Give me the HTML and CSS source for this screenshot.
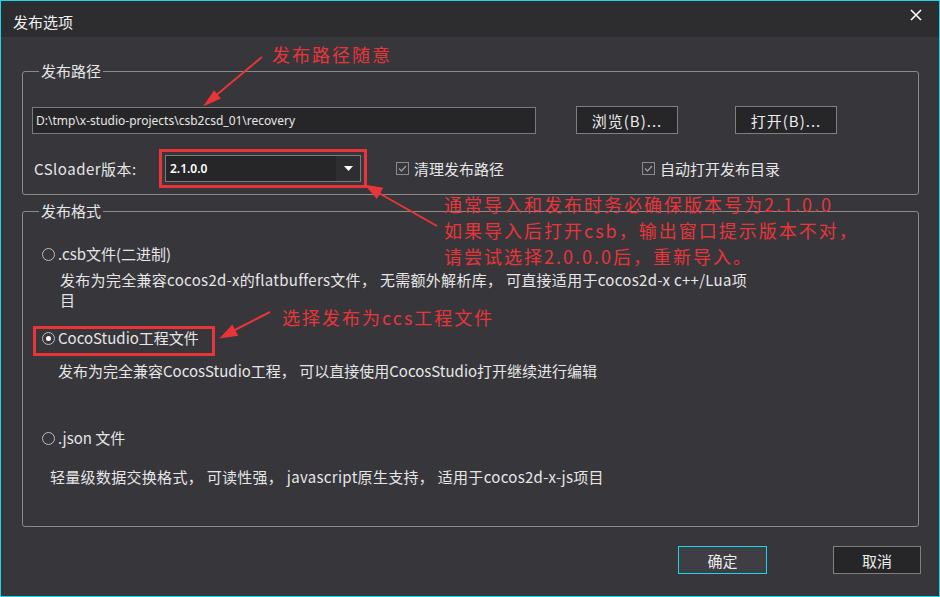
FILE: index.html
```html
<!DOCTYPE html>
<html lang="zh-CN">
  <head>
    <meta charset="UTF-8" />
    <meta name="viewport" content="width=device-width, initial-scale=1.0" />
    <title>发布选项</title>
    <link rel="stylesheet" href="styles.css">
  </head>
  <body>
    <div class="window">
      <div class="titlebar">
        <span class="title">发布选项</span>
        <svg class="close" width="12" height="12" viewBox="0 0 12 12">
          <path d="M1 1 L11 11 M11 1 L1 11" stroke="#ffffff" stroke-width="1.6" fill="none" />
        </svg>
      </div>

      <div class="group group-path">
        <div class="group-title">发布路径</div>
        <div class="row row-path">
          <div class="path-input">D:\tmp\x-studio-projects\csb2csd_01\recovery</div>
          <button class="btn btn-browse">浏览(B)...</button>
          <button class="btn btn-open">打开(B)...</button>
        </div>
        <div class="row row-version">
          <span class="version-label">CSloader版本:</span>
          <div class="combo">
            <span class="combo-value">2.1.0.0</span>
            <span class="combo-arrow">
              <svg width="9" height="5" viewBox="0 0 9 5"><path d="M0 0 L9 0 L4.5 5 Z" fill="#ffffff" /></svg>
            </span>
          </div>
          <label class="check check-clean">
            <span class="check-box">
              <svg width="11" height="11" viewBox="0 0 11 11"><path d="M2 5.5 L4.5 8 L9 3" stroke="#9a9a9a" stroke-width="1.3" fill="none" /></svg>
            </span>
            清理发布路径
          </label>
          <label class="check">
            <span class="check-box">
              <svg width="11" height="11" viewBox="0 0 11 11"><path d="M2 5.5 L4.5 8 L9 3" stroke="#9a9a9a" stroke-width="1.3" fill="none" /></svg>
            </span>
            自动打开发布目录
          </label>
        </div>
      </div>

      <div class="group group-format">
        <div class="group-title">发布格式</div>

        <label class="radio radio-csb"><span class="radio-dot"></span>.csb文件(二进制)</label>
        <p class="desc desc-csb">发布为完全兼容cocos2d-x的flatbuffers文件， 无需额外解析库， 可直接适用于cocos2d-x c++/Lua项<br>目</p>

        <label class="radio radio-ccs marked"><span class="radio-dot checked"></span>CocoStudio工程文件</label>
        <p class="desc desc-ccs">发布为完全兼容CocosStudio工程， 可以直接使用CocosStudio打开继续进行编辑</p>

        <label class="radio radio-json"><span class="radio-dot"></span>.json 文件</label>
        <p class="desc desc-json">轻量级数据交换格式， 可读性强， javascript原生支持， 适用于cocos2d-x-js项目</p>
      </div>

      <div class="footer">
        <button class="btn btn-ok">确定</button>
        <button class="btn btn-cancel">取消</button>
      </div>

      <!-- annotations drawn on top of the dialog -->
      <svg class="arrows" width="940" height="597" viewBox="0 0 940 597">
        <g stroke="#e8353a" stroke-width="2" fill="#e8353a">
          <line x1="262" y1="57" x2="214" y2="97" />
          <polygon points="206,104 219.3,98.1 214.1,91.9" />
          <line x1="437" y1="226" x2="377" y2="192" />
          <polygon points="367,186 381.7,188.6 376.7,197.2" />
          <line x1="270" y1="312" x2="231" y2="332" />
          <polygon points="222,337 236.7,334.9 232.1,326.1" />
        </g>
      </svg>
      <div class="note note-path">发布路径随意</div>
      <div class="note note-version">通常导入和发布时务必确保版本号为2.1.0.0<br>如果导入后打开csb，输出窗口提示版本不对，<br>请尝试选择2.0.0.0后，重新导入。</div>
      <div class="note note-ccs">选择发布为ccs工程文件</div>
    </div>
  </body>
</html>
```

FILE: styles.css
```css
body {
  margin: 0;
  padding: 0;
  background-color: #37363b;
  font-family: "Noto Sans CJK SC", sans-serif;
}

.window {
  position: relative;
  width: 940px;
  height: 597px;
  box-sizing: border-box;
  border: 1px solid #1ed4ee;
  background-color: #37363b;
  color: #e6e6e6;
  font-size: 15px;
  overflow: hidden;
}

.titlebar {
  display: flex;
  align-items: center;
  justify-content: space-between;
  height: 36px;
  padding: 6px 17px 0 12px;
  box-sizing: border-box;
  background-color: #2d2d30;
}

.title {
  font-size: 15px;
  line-height: 20px;
  color: #f0f0f0;
}

.close {
  margin-bottom: 14px;
}

.group {
  margin: 0 20px 0 21px;
  padding: 0 9px;
  border: 1px solid #8a8a8a;
  border-radius: 3px;
}

.group-path {
  margin-top: 34px;
  padding-bottom: 12px;
}

.group-format {
  margin-top: 16px;
  padding-bottom: 41px;
}

.group-title {
  display: table;
  margin: -11px 0 0 7px;
  padding: 0 2px;
  line-height: 20px;
  background-color: #37363b;
  color: #e6e6e6;
}

.row {
  display: flex;
  align-items: center;
}

.row-path {
  margin-top: 25px;
  height: 28px;
}

.path-input {
  width: 504px;
  height: 27px;
  box-sizing: border-box;
  padding: 0 3px;
  border: 1px solid #7a7a7a;
  background-color: #262628;
  font-family: "Noto Sans", sans-serif;
  font-size: 12px;
  line-height: 25px;
  color: #e6e6e6;
}

.btn {
  height: 28px;
  box-sizing: border-box;
  padding: 0;
  border: 1px solid #7f7f7f;
  background-color: #262628;
  color: #ececec;
  font-family: "Noto Sans CJK SC", sans-serif;
  font-size: 15px;
  cursor: pointer;
}

.btn-browse,
.btn-open {
  width: 102px;
  letter-spacing: 1px;
}

.btn-browse {
  margin-left: 40px;
}

.btn-open {
  margin-left: 57px;
}

.row-version {
  margin-top: 21px;
  height: 27px;
}

.version-label {
  width: 131px;
  margin-left: 2px;
  letter-spacing: 0.5px;
}

.combo {
  display: flex;
  align-items: center;
  width: 196px;
  height: 27px;
  box-sizing: border-box;
  border: 1px solid #7a7a7a;
  background-color: #262628;
  outline: 3px solid #e8353a;
  outline-offset: 3px;
}

.combo-value {
  flex: 1;
  padding-left: 4px;
  font-family: "Noto Sans", sans-serif;
  font-size: 12px;
  font-weight: 600;
  color: #ffffff;
}

.combo-arrow {
  display: flex;
  align-items: center;
  justify-content: center;
  width: 24px;
  height: 25px;
  background-color: #2e2e31;
}

.check {
  display: flex;
  align-items: center;
  gap: 5px;
}

.check-clean {
  width: 246px;
  margin-left: 35px;
}

.check-box {
  display: flex;
  align-items: center;
  justify-content: center;
  width: 13px;
  height: 13px;
  box-sizing: border-box;
  border: 1px solid #8c8c8c;
}

.radio {
  display: flex;
  align-items: center;
  gap: 3px;
  height: 16px;
  margin-left: 10px;
  line-height: 16px;
}

.radio-dot {
  display: flex;
  align-items: center;
  justify-content: center;
  width: 13px;
  height: 13px;
  box-sizing: border-box;
  border: 1px solid #bdbdbd;
  border-radius: 50%;
}

.radio-dot.checked::after {
  content: "";
  width: 5px;
  height: 5px;
  border-radius: 50%;
  background-color: #ffffff;
}

.radio-csb {
  margin-top: 25px;
}

.radio.marked {
  display: inline-flex;
  margin-top: 16px;
  margin-left: 1px;
  padding: 1px 13px 7px 6px;
  border: 3px solid #e8353a;
}

.radio-json {
  margin-top: 51px;
}

.desc {
  margin: 0;
  font-size: 15px;
  line-height: 16px;
}

.desc-csb {
  margin-top: 8px;
  margin-left: 28px;
  line-height: 20px;
  letter-spacing: 0.3px;
}

.desc-ccs {
  margin-top: 7px;
  margin-left: 26px;
}

.desc-json {
  margin-top: 23px;
  margin-left: 18px;
  letter-spacing: 0.3px;
}

.footer {
  display: flex;
  justify-content: flex-end;
  margin: 19px 18px 0 0;
}

.btn-ok {
  width: 89px;
  border-color: #19d4ef;
  background-color: #3f3e45;
}

.btn-cancel {
  width: 88px;
  margin-left: 66px;
}

.arrows {
  position: absolute;
  left: -1px;
  top: -1px;
  pointer-events: none;
}

.note {
  position: absolute;
  color: #e8353a;
  font-size: 18px;
  line-height: 26px;
  letter-spacing: 2px;
  white-space: nowrap;
}

.note-path {
  left: 271px;
  top: 40px;
}

.note-version {
  left: 443px;
  top: 190px;
}

.note-ccs {
  left: 281px;
  top: 303px;
}
```
